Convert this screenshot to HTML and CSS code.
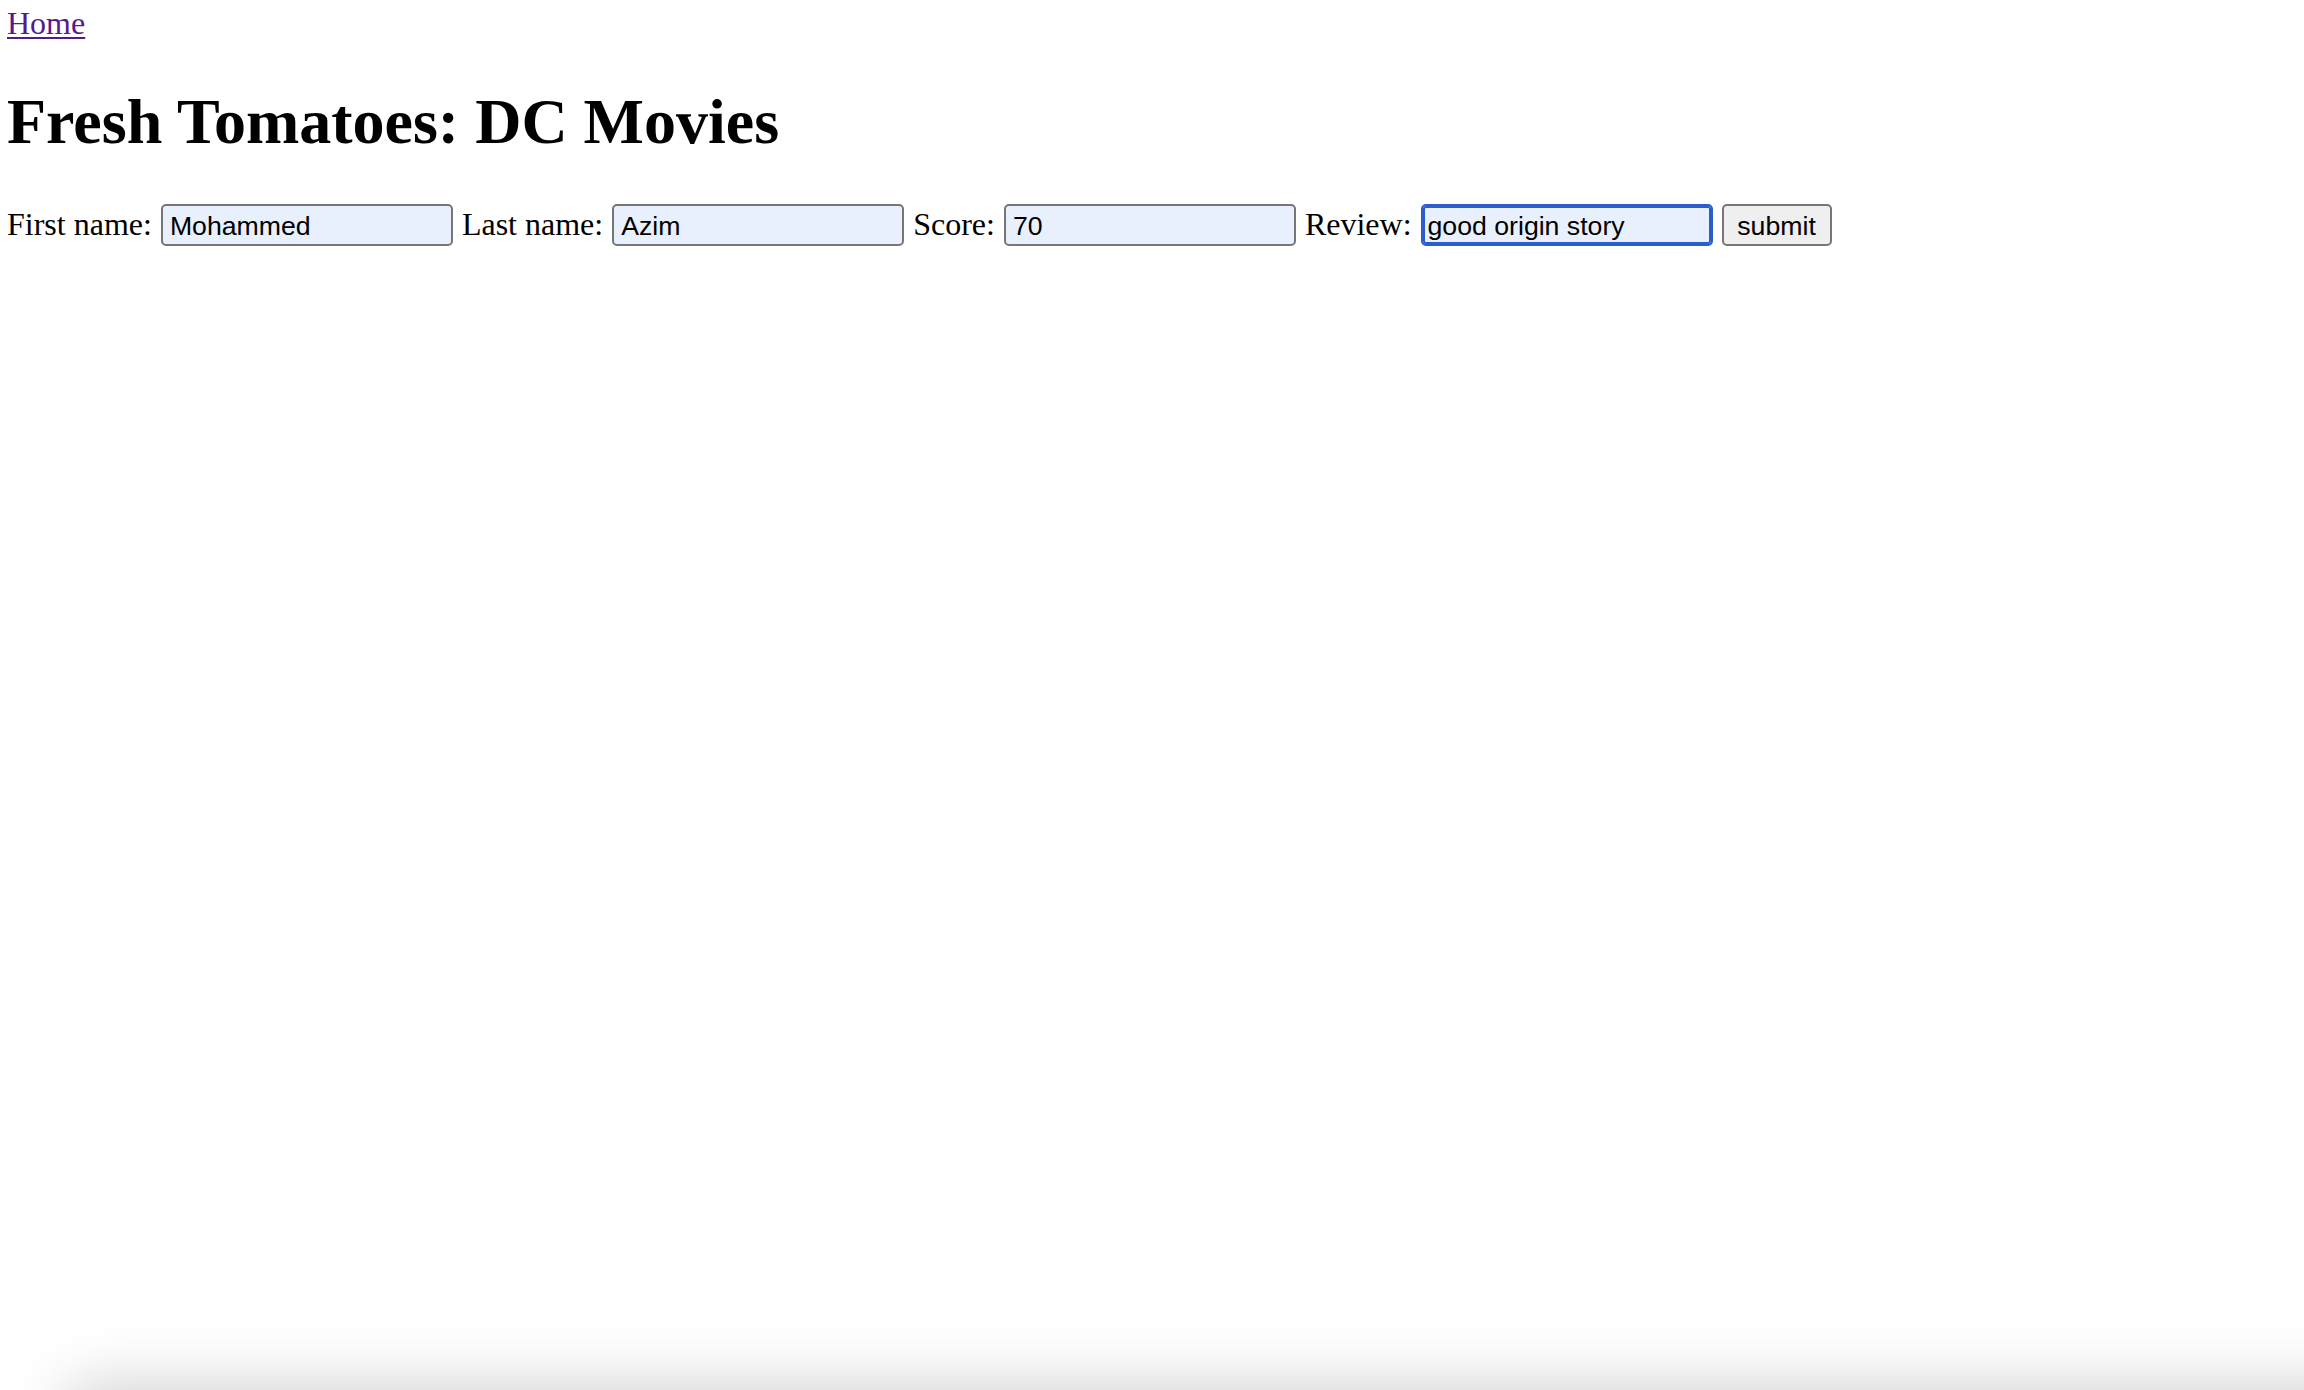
FILE: index.html
```html
<!DOCTYPE html>
<html lang="en">
<head>
<meta charset="utf-8">
<title>Fresh Tomatoes: DC Movies</title>
<link rel="stylesheet" href="styles.css">
</head>
<body>
<a class="home-link" href="#">Home</a>
<h1 class="title">Fresh Tomatoes: DC Movies</h1>
<form class="review-form">
  <label class="field-label" for="first">First name:</label>
  <input class="field" id="first" type="text" value="Mohammed">
  <label class="field-label" for="last">Last name:</label>
  <input class="field" id="last" type="text" value="Azim">
  <label class="field-label" for="score">Score:</label>
  <input class="field" id="score" type="text" value="70">
  <label class="field-label" for="review">Review:</label>
  <input class="field field-focused" id="review" type="text" value="good origin story">
  <button class="submit-btn" type="button">submit</button>
</form>
<div class="bottom-shade"></div>
</body>
</html>
```

FILE: styles.css
```css
html, body {
  margin: 0;
  padding: 0;
  background: #ffffff;
}

body {
  padding: 5px 0 0 7px;
  font-family: "Liberation Serif", "Times New Roman", serif;
  font-size: 32px;
  color: #000000;
  min-height: 1390px;
  box-sizing: border-box;
  overflow: hidden;
}

.home-link {
  color: #551a8b;
  text-decoration: underline;
  text-decoration-thickness: 2px;
  text-underline-offset: 3px;
}

.title {
  font-family: "Liberation Serif", "Times New Roman", serif;
  font-size: 64px;
  font-weight: bold;
  margin: 43px 0 45px 0;
  line-height: normal;
}

.review-form {
  display: flex;
  align-items: baseline;
  gap: 9px;
}

.field-label {
  font-family: "Liberation Serif", "Times New Roman", serif;
  font-size: 32px;
  white-space: nowrap;
}

.field {
  box-sizing: border-box;
  width: 292px;
  height: 42px;
  padding: 2px 7px 0 7px;
  margin: 0;
  border: 2px solid #767676;
  border-radius: 5px;
  background: #e8f0fe;
  font-family: "Liberation Sans", Arial, sans-serif;
  font-size: 26.67px;
  color: #000000;
  outline: none;
}

.field-focused {
  border-color: #2a5ec8;
  box-shadow: inset 0 0 0 2px #2a5ec8;
  padding-left: 5px;
}

.submit-btn {
  box-sizing: border-box;
  width: 110px;
  height: 42px;
  margin: 0;
  padding: 2px 0 0 0;
  border: 2px solid #767676;
  border-radius: 5px;
  background: #efefef;
  font-family: "Liberation Sans", Arial, sans-serif;
  font-size: 26.67px;
  color: #000000;
}

.bottom-shade {
  position: fixed;
  left: 60px;
  right: -200px;
  bottom: -70px;
  height: 80px;
  border-radius: 40px;
  background: rgba(0, 0, 0, 0.16);
  filter: blur(28px);
  pointer-events: none;
}
```
